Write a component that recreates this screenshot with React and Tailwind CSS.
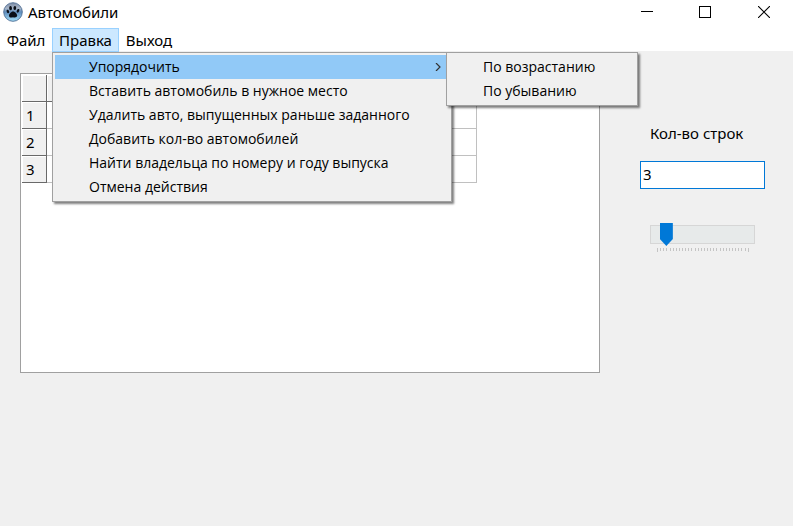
import { useState } from "react";

const menuItems = [
  "Вставить автомобиль в нужное место",
  "Удалить авто, выпущенных раньше заданного",
  "Добавить кол-во автомобилей",
  "Найти владельца по номеру и году выпуска",
  "Отмена действия",
];

const ticks = Array.from({ length: 30 }, (_, i) => i);

function PawIcon() {
  return (
    <svg className="size-5" viewBox="0 0 20 20" aria-hidden="true">
      <defs>
        <linearGradient id="orb" x1="0" y1="0" x2="0" y2="1">
          <stop offset="0" stopColor="#7b8aa3" />
          <stop offset="0.3" stopColor="#a9b6c8" />
          <stop offset="0.5" stopColor="#5f8dbd" />
          <stop offset="1" stopColor="#a4e0fa" />
        </linearGradient>
      </defs>
      <circle cx="10" cy="10" r="9.3" fill="url(#orb)" stroke="#4d6c93" strokeWidth="0.9" />
      <g fill="#0b0f18">
        <ellipse cx="7.6" cy="6.2" rx="1.4" ry="2.1" transform="rotate(-8 7.6 6.2)" />
        <ellipse cx="11.8" cy="6" rx="1.4" ry="2.1" transform="rotate(8 11.8 6)" />
        <ellipse cx="4.9" cy="9.4" rx="1.2" ry="1.8" transform="rotate(-25 4.9 9.4)" />
        <ellipse cx="15" cy="8.8" rx="1.2" ry="1.9" transform="rotate(25 15 8.8)" />
        <path d="M10 9.4c-1.9 0-4 2.5-4 4.3 0 2 2.2 2 4 1.5 1.8.5 4.2.3 4.2-1.6 0-1.9-2.3-4.2-4.2-4.2z" />
      </g>
    </svg>
  );
}

function TitleBar() {
  return (
    <header className="flex h-7 items-start bg-white">
      <div className="flex h-6 flex-1 items-center gap-[5px] pl-[3px]">
        <PawIcon />
        <h1>Автомобили</h1>
      </div>
      <div className="flex h-6">
        <button aria-label="Свернуть" className="flex w-[58px] items-center justify-center">
          <svg className="size-3" viewBox="0 0 12 12" shapeRendering="crispEdges">
            <path d="M0 5.5h12" stroke="#000" />
          </svg>
        </button>
        <button aria-label="Развернуть" className="flex w-[58px] items-center justify-center">
          <svg className="size-3" viewBox="0 0 12 12" shapeRendering="crispEdges">
            <rect x="0.5" y="0.5" width="11" height="11" fill="none" stroke="#000" />
          </svg>
        </button>
        <button aria-label="Закрыть" className="flex w-[59px] items-center justify-center">
          <svg className="size-3" viewBox="0 0 12 12">
            <path d="M0 0l12 12M12 0L0 12" stroke="#000" strokeWidth="1.1" />
          </svg>
        </button>
      </div>
    </header>
  );
}

function SubMenu() {
  return (
    <ul
      role="menu"
      className="absolute -top-[3px] left-[391px] w-48 border border-[#a0a0a0] bg-[#f0f0f0] p-[2px] shadow-[2px_2px_2px_#00000080]"
    >
      {["По возрастанию", "По убыванию"].map((t) => (
        <li key={t} role="none">
          <button role="menuitem" className="flex h-6 w-full items-center pl-[34px]">
            {t}
          </button>
        </li>
      ))}
    </ul>
  );
}

function EditMenu() {
  return (
    <ul
      role="menu"
      className="absolute left-0 top-6 z-10 w-[400px] border border-[#a0a0a0] bg-[#f0f0f0] p-[2px] font-['Open_Sans','Segoe_UI',sans-serif] text-sm shadow-[2px_2px_2px_#00000080]"
    >
      <li role="none" className="relative">
        <button
          role="menuitem"
          aria-haspopup="menu"
          aria-expanded="true"
          className="flex h-6 w-full items-center justify-between bg-[#91c9f7] pl-[34px] pr-2"
        >
          Упорядочить
          <svg className="h-2 w-[6px]" viewBox="0 0 6 8" fill="none">
            <path d="M1 0l4 4-4 4" stroke="#333" strokeWidth="1.2" />
          </svg>
        </button>
        <SubMenu />
      </li>
      {menuItems.map((t) => (
        <li key={t} role="none">
          <button role="menuitem" className="flex h-6 w-full items-center pl-[34px]">
            {t}
          </button>
        </li>
      ))}
    </ul>
  );
}

function MenuBar() {
  return (
    <nav className="flex h-[23px] bg-white">
      <button className="h-6 w-[52px]">Файл</button>
      <div className="relative w-[67px]">
        <button
          aria-haspopup="menu"
          aria-expanded="true"
          className="h-6 w-full border border-[#99d1ff] bg-[#cce8ff]"
        >
          Правка
        </button>
        <EditMenu />
      </div>
      <button className="h-6 w-[60px]">Выход</button>
    </nav>
  );
}

function CarTable() {
  const head =
    "border-b border-r border-[#696969] bg-[#f0f0f0] shadow-[inset_1px_1px_0_#fff]";
  return (
    <div className="h-[300px] min-w-0 flex-1 border border-[#a0a0a0] bg-white p-px">
      <table className="w-[455px] table-fixed border-separate border-spacing-0 text-left">
        <thead>
          <tr className="h-[27px]">
            <th className={head + " w-[25px]"} />
            {[1, 2, 3, 4].map((c) => (
              <th key={c} className={head} />
            ))}
          </tr>
        </thead>
        <tbody>
          {[1, 2, 3].map((r) => (
            <tr key={r} className="h-[27px]">
              <th className={head + " pl-1 font-normal"}>{r}</th>
              {[1, 2, 3, 4].map((c) => (
                <td key={c} className="border-b border-r border-[#c0c0c0]" />
              ))}
            </tr>
          ))}
        </tbody>
      </table>
    </div>
  );
}

function RowControls() {
  const [rows, setRows] = useState("3");
  return (
    <section className="flex w-[125px] shrink-0 flex-col pt-[50px]">
      <label htmlFor="rows" className="pl-[10px]">
        Кол-во строк
      </label>
      <input
        id="rows"
        value={rows}
        onChange={(e) => setRows(e.target.value)}
        className="mt-[18px] h-7 w-full border border-[#0078d7] bg-white px-[2px] pb-[2px] outline-none"
      />
      <div className="ml-[10px] mt-[34px] w-[105px]">
        <input
          type="range"
          aria-label="Кол-во строк"
          min="0"
          max="28"
          value={Number(rows) || 0}
          onChange={(e) => setRows(e.target.value)}
          className="block h-[23px] w-full appearance-none bg-transparent [&::-webkit-slider-runnable-track]:h-[19px] [&::-webkit-slider-runnable-track]:border-y [&::-webkit-slider-runnable-track]:border-[#d6d6d6] [&::-webkit-slider-runnable-track]:bg-[#e7eaea] [&::-webkit-slider-runnable-track]:shadow-[inset_1px_0_0_#d6d6d6,inset_-1px_0_0_#d6d6d6] [&::-webkit-slider-thumb]:-mt-[3px] [&::-webkit-slider-thumb]:h-[23px] [&::-webkit-slider-thumb]:w-[13px] [&::-webkit-slider-thumb]:appearance-none [&::-webkit-slider-thumb]:bg-[#0078d7] [&::-webkit-slider-thumb]:[clip-path:polygon(0_0,100%_0,100%_70%,50%_100%,0_70%)]"
        />
        <div className="ml-[7px] mr-[6px] mt-[2px] flex justify-between" aria-hidden="true">
          {ticks.map((t) => (
            <span
              key={t}
              className={t === 0 || t === 29 ? "h-1 w-px bg-[#c4c4c4]" : "h-[3px] w-px bg-[#c4c4c4]"}
            />
          ))}
        </div>
      </div>
    </section>
  );
}

export default function App() {
  return (
    <div className="min-h-screen bg-[#f0f0f0] font-['Noto_Sans','Segoe_UI',sans-serif] text-[15px] leading-5 text-black">
      <TitleBar />
      <MenuBar />
      <main className="flex items-start gap-10 pl-5 pr-7 pt-[22px]">
        <CarTable />
        <RowControls />
      </main>
    </div>
  );
}
